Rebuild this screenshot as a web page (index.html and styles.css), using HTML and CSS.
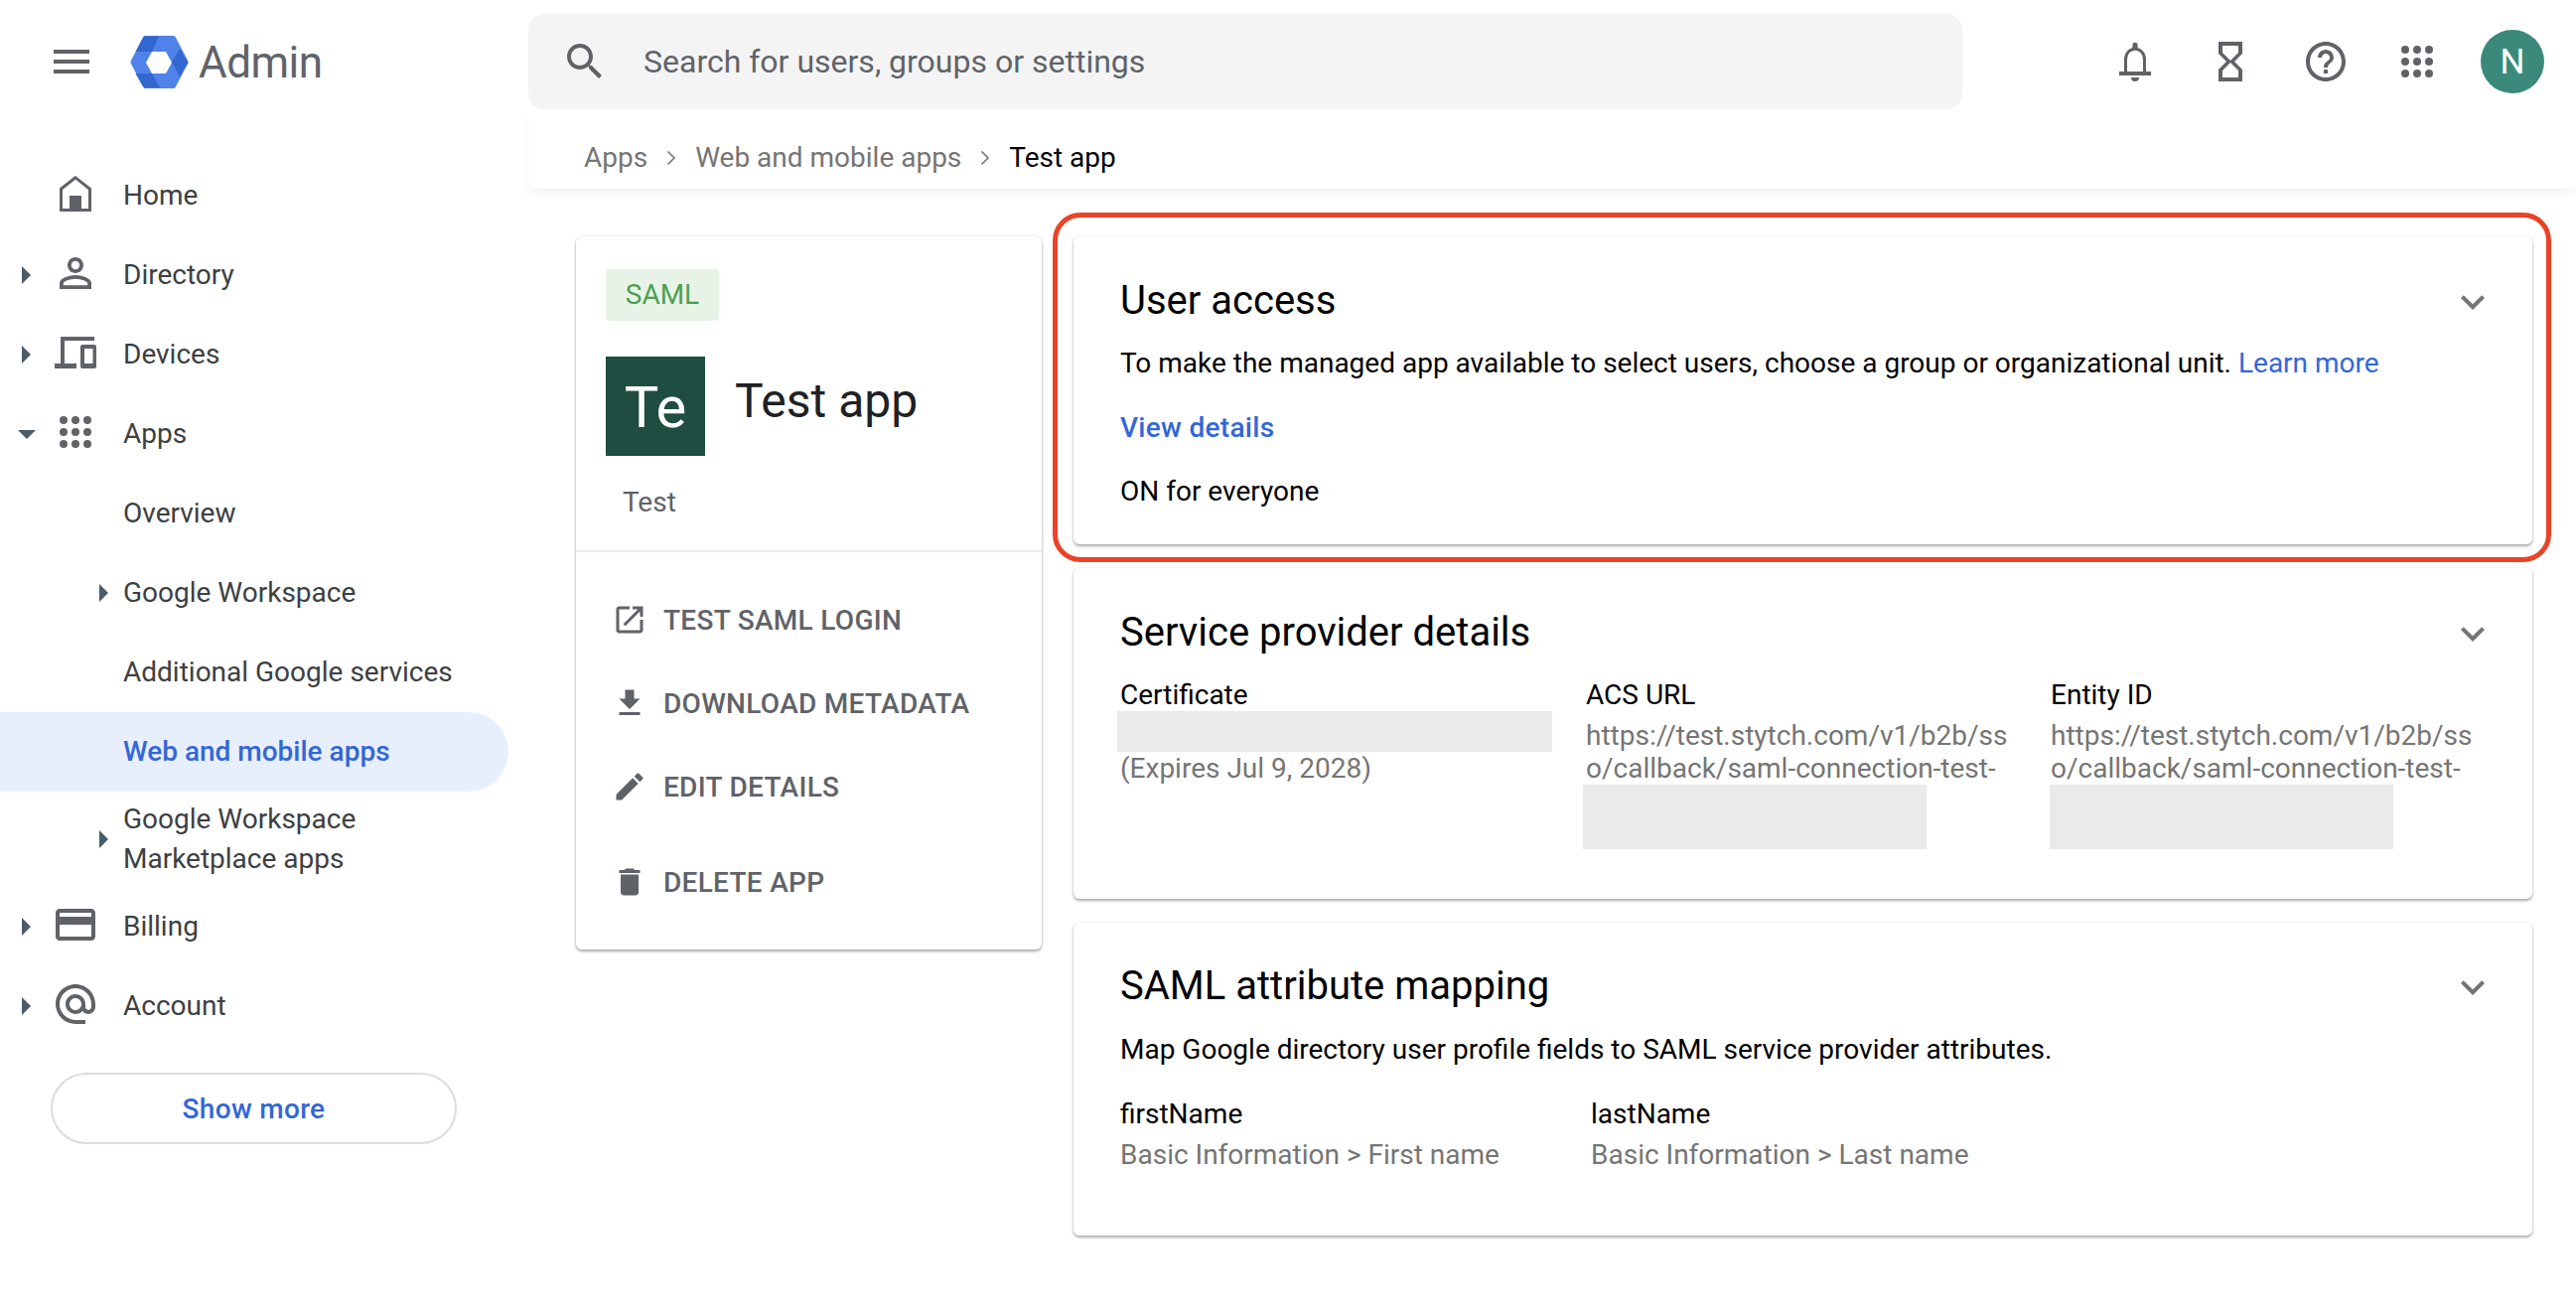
FILE: index.html
```html
<!DOCTYPE html>
<html lang="en">
<head>
<meta charset="utf-8">
<title>Admin - Test app</title>
<link rel="stylesheet" href="styles.css">
</head>
<body>
<div class="app">
  <aside class="sidebar">
    <div class="brand">
      <svg class="ico48" viewBox="0 0 24 24"><path d="M3 18h18v-2H3v2zm0-5h18v-2H3v2zm0-7v2h18V6H3z"/></svg>
      <svg class="logo" viewBox="0 0 59 53">
        <path class="logo-light" stroke-width="5" stroke-linejoin="round" d="M3 26.500 15.500 2.500h28L56 26.500 43.500 50.500h-28z"/>
        <path class="logo-dark" d="M14 0.500H29L22 16H5.500L13 2z"/>
        <path class="logo-dark" d="M42 27 50 13 58.500 27 50 41z"/>
        <path class="logo-dark" d="M5.500 38H22L30 52.500H14.500L13 51z"/>
        <path class="logo-hole" d="M16 27 22 16H36L42 27 36 38H22z"/>
      </svg>
      <span class="brand-name">Admin</span>
    </div>
    <nav class="nav">
      <a class="row">
        <span class="slot"></span>
        <svg class="ico48" viewBox="0 0 24 24"><path class="home-line" d="M12 3.900 4.750 9.600V20.250H19.250V9.600z"/><path d="M9 13h6v7.500H9z"/></svg>
        <span class="label">Home</span>
      </a>
      <a class="row">
        <span class="slot"><svg class="caret" viewBox="0 0 9 18"><path d="M0 0 9 9 0 18z"/></svg></span>
        <svg class="ico48" viewBox="0 0 24 24"><path d="M12 5.900a2.100 2.100 0 1 1 0 4.200 2.100 2.100 0 0 1 0-4.200m0 9c2.970 0 6.100 1.460 6.100 2.100v1.100H5.900V17c0-.64 3.130-2.100 6.100-2.100M12 4C9.790 4 8 5.790 8 8s1.790 4 4 4 4-1.790 4-4-1.790-4-4-4zm0 9c-2.670 0-8 1.340-8 4v3h16v-3c0-2.660-5.330-4-8-4z"/></svg>
        <span class="label">Directory</span>
      </a>
      <a class="row">
        <span class="slot"><svg class="caret" viewBox="0 0 9 18"><path d="M0 0 9 9 0 18z"/></svg></span>
        <span class="icon-box"><svg class="ico-devices" viewBox="0 0 42 32"><path d="M6 0H40V4H10V27H22V32H0V27H6z"/><path fill-rule="evenodd" d="M28 8H40a2 2 0 0 1 2 2V30a2 2 0 0 1-2 2H28a2 2 0 0 1-2-2V10a2 2 0 0 1 2-2zM30 12V27H38.500V12z"/></svg></span>
        <span class="label">Devices</span>
      </a>
      <a class="row">
        <span class="slot"><svg class="caret-down" viewBox="0 0 18 9"><path d="M0 0H18L9 9z"/></svg></span>
        <svg class="ico48" viewBox="0 0 48 48"><circle cx="12" cy="12" r="4"/><circle cx="24" cy="12" r="4"/><circle cx="36" cy="12" r="4"/><circle cx="12" cy="24" r="4"/><circle cx="24" cy="24" r="4"/><circle cx="36" cy="24" r="4"/><circle cx="12" cy="36" r="4"/><circle cx="24" cy="36" r="4"/><circle cx="36" cy="36" r="4"/></svg>
        <span class="label">Apps</span>
      </a>
      <a class="row"><span class="sub-slot"></span><span class="label">Overview</span></a>
      <a class="row"><span class="sub-slot"><svg class="caret" viewBox="0 0 9 18"><path d="M0 0 9 9 0 18z"/></svg></span><span class="label">Google Workspace</span></a>
      <a class="row"><span class="sub-slot"></span><span class="label">Additional Google services</span></a>
      <a class="row row-active"><span class="sub-slot"></span><span class="label">Web and mobile apps</span></a>
      <a class="row row-tall"><span class="sub-slot"><svg class="caret" viewBox="0 0 9 18"><path d="M0 0 9 9 0 18z"/></svg></span><span class="label">Google Workspace<br>Marketplace apps</span></a>
      <a class="row">
        <span class="slot"><svg class="caret" viewBox="0 0 9 18"><path d="M0 0 9 9 0 18z"/></svg></span>
        <svg class="ico48" viewBox="0 0 24 24"><path d="M20 4H4c-1.110 0-1.990.89-1.990 2L2 18c0 1.110.89 2 2 2h16c1.110 0 2-.89 2-2V6c0-1.110-.89-2-2-2zm0 14H4v-6h16v6zm0-10H4V6h16v2z"/></svg>
        <span class="label">Billing</span>
      </a>
      <a class="row">
        <span class="slot"><svg class="caret" viewBox="0 0 9 18"><path d="M0 0 9 9 0 18z"/></svg></span>
        <svg class="ico48" viewBox="0 0 24 24"><path d="M12 1.950c-5.520 0-10 4.480-10 10s4.480 10 10 10h5v-2h-5c-4.340 0-8-3.660-8-8s3.660-8 8-8 8 3.660 8 8v1.430c0 .79-.71 1.570-1.500 1.570s-1.500-.78-1.500-1.570v-1.430c0-2.760-2.240-5-5-5s-5 2.240-5 5 2.240 5 5 5c1.380 0 2.640-.56 3.540-1.470.65.89 1.770 1.470 2.960 1.470 1.970 0 3.500-1.600 3.500-3.570v-1.430c0-5.520-4.480-10-10-10zm0 13c-1.660 0-3-1.340-3-3s1.340-3 3-3 3 1.340 3 3-1.340 3-3 3z"/></svg>
        <span class="label">Account</span>
      </a>
    </nav>
    <button class="show-more">Show more</button>
  </aside>

  <main class="main">
    <header class="topbar">
      <div class="search">
        <svg class="ico48" viewBox="0 0 24 24"><path d="M15.500 14h-.79l-.28-.27C15.410 12.590 16 11.110 16 9.500 16 5.910 13.090 3 9.500 3S3 5.910 3 9.500 5.910 16 9.500 16c1.610 0 3.090-.59 4.230-1.570l.27.28v.79l5 4.990L20.490 19l-4.990-5zm-6 0C7.010 14 5 11.990 5 9.500S7.010 5 9.500 5 14 7.010 14 9.500 11.990 14 9.500 14z"/></svg>
        <span class="search-text">Search for users, groups or settings</span>
      </div>
      <div class="tools">
        <svg class="ico48" viewBox="0 0 24 24"><path class="bell-line" d="M7.250 17.500V11c0-3 1.900-5.400 4.750-5.400S16.750 8 16.750 11v6.500"/><path d="M4 17h16v2H4zM10 20h4a2 2 0 0 1-4 0zM10.700 5V3.700a1.300 1.300 0 0 1 2.600 0V5z"/></svg>
        <svg class="ico48" viewBox="0 0 24 24"><path d="M6 2v6h.01L6 8.010 10 12l-4 4 .01.01H6V22h12v-5.990h-.01L18 16l-4-4 4-3.990-.01-.01H18V2H6zm10 14.500V20H8v-3.500l4-4 4 4zm-4-5-4-4V4h8v3.500l-4 4z"/></svg>
        <svg class="ico48" viewBox="0 0 24 24"><path d="M11 18h2v-2h-2v2zm1-16C6.480 2 2 6.480 2 12s4.480 10 10 10 10-4.480 10-10S17.520 2 12 2zm0 18c-4.410 0-8-3.590-8-8s3.590-8 8-8 8 3.590 8 8-3.590 8-8 8zm0-14c-2.210 0-4 1.790-4 4h2c0-1.100.9-2 2-2s2 .9 2 2c0 2-3 1.750-3 5h2c0-2.250 3-2.500 3-5 0-2.210-1.790-4-4-4z"/></svg>
        <svg class="ico48 tool-grid" viewBox="0 0 48 48"><circle cx="12" cy="12" r="4"/><circle cx="24" cy="12" r="4"/><circle cx="36" cy="12" r="4"/><circle cx="12" cy="24" r="4"/><circle cx="24" cy="24" r="4"/><circle cx="36" cy="24" r="4"/><circle cx="12" cy="36" r="4"/><circle cx="24" cy="36" r="4"/><circle cx="36" cy="36" r="4"/></svg>
        <span class="avatar">N</span>
      </div>
    </header>
    <div class="crumbs">
      <span class="crumb">Apps</span>
      <svg class="crumb-sep" viewBox="0 0 10 16"><path d="M1.500 1.500 8 8 1.500 14.500"/></svg>
      <span class="crumb">Web and mobile apps</span>
      <svg class="crumb-sep" viewBox="0 0 10 16"><path d="M1.500 1.500 8 8 1.500 14.500"/></svg>
      <span class="crumb crumb-current">Test app</span>
    </div>

    <div class="content">
      <section class="app-card">
        <div class="app-info">
          <span class="badge">SAML</span>
          <div class="app-title">
            <span class="app-tile">Te</span>
            <h1 class="app-name">Test app</h1>
          </div>
          <p class="app-desc">Test</p>
        </div>
        <ul class="actions">
          <li class="action action-1">
            <svg class="ico36" viewBox="0 0 24 24"><path d="M19 19H5V5h7V3H5c-1.110 0-2 .9-2 2v14c0 1.100.89 2 2 2h14c1.100 0 2-.9 2-2v-7h-2v7zM14 3v2h3.590l-9.830 9.830 1.410 1.410L19 6.410V10h2V3h-7z"/></svg>
            <span>TEST SAML LOGIN</span>
          </li>
          <li class="action">
            <svg class="ico36" viewBox="0 0 24 24"><path d="M19 9h-4V3H9v6H5l7 7 7-7zM5 18v2h14v-2H5z"/></svg>
            <span>DOWNLOAD METADATA</span>
          </li>
          <li class="action">
            <svg class="ico36" viewBox="0 0 24 24"><path d="M3 17.250V21h3.750L17.810 9.940l-3.750-3.750L3 17.250zM20.710 7.040c.39-.39.39-1.020 0-1.410l-2.340-2.340c-.39-.39-1.020-.39-1.410 0l-1.830 1.830 3.750 3.750 1.830-1.830z"/></svg>
            <span>EDIT DETAILS</span>
          </li>
          <li class="action action-last">
            <svg class="ico36" viewBox="0 0 24 24"><path d="M6 19c0 1.100.9 2 2 2h8c1.100 0 2-.9 2-2V7H6v12zM19 4h-3.500l-1-1h-5l-1 1H5v2h14V4z"/></svg>
            <span>DELETE APP</span>
          </li>
        </ul>
      </section>

      <div class="panels">
        <div class="highlight">
          <section class="card card-access">
            <div class="card-head">
              <h2 class="card-title">User access</h2>
              <svg class="chevron" viewBox="0 0 24 24"><path d="M7.410 8.590 12 13.170l4.590-4.580L18 10l-6 6-6-6z"/></svg>
            </div>
            <p class="body-line">To make the managed app available to select users, choose a group or organizational unit. <a class="link">Learn more</a></p>
            <p class="body-line view-line"><a class="link link-strong">View details</a></p>
            <p class="body-line on-line">ON for everyone</p>
          </section>
        </div>

        <section class="card card-provider">
          <div class="card-head">
            <h2 class="card-title">Service provider details</h2>
            <svg class="chevron" viewBox="0 0 24 24"><path d="M7.410 8.590 12 13.170l4.590-4.580L18 10l-6 6-6-6z"/></svg>
          </div>
          <div class="provider-grid">
            <div class="field">
              <div class="field-label">Certificate</div>
              <div class="redact redact-cert"></div>
              <div class="field-value">(Expires Jul 9, 2028)</div>
            </div>
            <div class="field">
              <div class="field-label">ACS URL</div>
              <div class="field-value url">https://test.stytch.com/v1/b2b/sso/callback/saml-connection-test-</div>
              <div class="redact redact-url"></div>
            </div>
            <div class="field">
              <div class="field-label">Entity ID</div>
              <div class="field-value url">https://test.stytch.com/v1/b2b/sso/callback/saml-connection-test-</div>
              <div class="redact redact-url redact-entity"></div>
            </div>
          </div>
        </section>

        <section class="card card-mapping">
          <div class="card-head">
            <h2 class="card-title">SAML attribute mapping</h2>
            <svg class="chevron" viewBox="0 0 24 24"><path d="M7.410 8.590 12 13.170l4.590-4.580L18 10l-6 6-6-6z"/></svg>
          </div>
          <p class="body-line map-line">Map Google directory user profile fields to SAML service provider attributes.</p>
          <div class="map-grid">
            <div class="field">
              <div class="field-label">firstName</div>
              <div class="field-value map-value">Basic Information &gt; First name</div>
            </div>
            <div class="field">
              <div class="field-label">lastName</div>
              <div class="field-value map-value">Basic Information &gt; Last name</div>
            </div>
          </div>
        </section>
      </div>
    </div>
  </main>
</div>
</body>
</html>
```
FILE: styles.css
```css
* { box-sizing: border-box; }
html, body { margin: 0; padding: 0; background: #fff; }
body { font-family: Roboto, "Liberation Sans", sans-serif; font-size: 28px; color: #000; }
h1, h2, p, ul { margin: 0; padding: 0; font-weight: 400; }
ul { list-style: none; }
svg { display: block; flex: none; fill: #5f6368; }

.app { display: grid; grid-template-columns: 532px 2062px; height: 1324px; overflow: hidden; }

.ico48 { width: 48px; height: 48px; }
.ico36 { width: 36px; height: 36px; }

/* Sidebar */
.sidebar { display: flex; flex-direction: column; align-items: flex-start; }
.brand { display: flex; align-items: center; height: 157px; padding: 0 0 33px 48px; width: 100%; }
.logo { width: 59px; height: 53px; margin-left: 35px; }
.logo-light { fill: #4f83ea; stroke: #4f83ea; }
.logo-dark { fill: #3367d0; }
.logo-hole { fill: #fff; }
.brand-name { font-size: 44px; color: #5f6368; margin: 2px 0 0 10px; letter-spacing: -0.5px; }

.nav { width: 512px; }
.row { display: flex; align-items: center; height: 80px; color: #3c4043; line-height: 40px; }
.slot { width: 52px; display: flex; justify-content: center; padding-left: 1px; }
.icon-box { width: 48px; height: 48px; display: flex; align-items: center; justify-content: center; }
.sub-slot { width: 124px; padding-left: 100px; }
.row > .ico48, .row > .icon-box { margin: -4px 24px 0 0; }
.caret { width: 9px; height: 18px; fill: #4a5b6a; }
.caret-down { width: 18px; height: 9px; fill: #4a5b6a; }
.ico-devices { width: 42px; height: 32px; }
.home-line { fill: none; stroke: #5f6368; stroke-width: 1.5; }
.row-active { background: #e8effc; border-radius: 0 40px 40px 0; color: #3367d6; font-weight: 500; }
.row-tall { height: 96px; }
.show-more { margin: 27px 0 0 51px; width: 409px; height: 72px; border: 2px solid #dadce0; border-radius: 36px; background: #fff; font: 500 28px Roboto, sans-serif; letter-spacing: .3px; color: #3367d6; padding: 0; }

/* Top bar */
.topbar { display: flex; align-items: center; padding-top: 14px; height: 110px; }
.search { width: 1444px; height: 96px; background: #f4f4f4; border-radius: 16px; display: flex; align-items: center; padding-left: 33px; }
.search-text { margin-left: 35px; font-size: 32px; color: #5f6368; }
.tools { display: flex; align-items: center; gap: 48px; margin-left: 150px; }
.tool-grid { margin-left: -4px; margin-right: -8px; }
.bell-line { fill: none; stroke: #5f6368; stroke-width: 1.5; }
.avatar { width: 64px; height: 64px; border-radius: 50%; background: #3b897b; color: #fff; font-size: 35px; display: flex; align-items: center; justify-content: center; }

.crumbs { height: 80px; padding: 17px 0 0 56px; display: flex; align-items: center; gap: 19px; box-shadow: 0 6px 10px -3px rgba(0, 0, 0, .07); color: #757575; line-height: 40px; }
.crumb-current { color: #000; }
.crumb-sep { width: 10px; height: 16px; fill: none; stroke: #757575; stroke-width: 1.6; }

/* Content */
.content { display: flex; align-items: flex-start; padding: 48px 0 0 48px; gap: 32px; }

.app-card { width: 469px; height: 718px; background: #fff; border-radius: 6px; box-shadow: 0 2px 3px rgba(0, 0, 0, .32), 0 0 3px rgba(0, 0, 0, .12); }
.app-info { padding: 33px 30px 0; height: 318px; border-bottom: 2px solid #ededed; }
.badge { display: inline-block; width: 114px; height: 52px; line-height: 52px; text-align: center; background: #e8f3e8; border-radius: 4px; color: #4e9f50; }
.app-title { display: flex; align-items: flex-start; margin-top: 36px; }
.app-tile { width: 100px; height: 100px; background: #1f4d41; color: #fff; font-size: 58px; display: flex; align-items: center; justify-content: center; padding-top: 2px; }
.app-name { font-size: 48px; line-height: 60px; margin: 15px 0 0 30px; color: #202124; }
.app-desc { margin: 31px 0 0 17px; line-height: 32px; color: #5f6368; }
.actions { padding: 43px 0 0 36px; }
.action { display: flex; align-items: center; height: 50px; margin-bottom: 34px; gap: 16px; font-weight: 500; color: #5f6368; letter-spacing: .3px; }
.actions .action-last { margin-top: 46px; }

.panels { width: 1469px; display: flex; flex-direction: column; }
.highlight { position: relative; margin-bottom: 24px; }
.highlight::after { content: ""; position: absolute; top: -24px; right: -19px; bottom: -18px; left: -21px; border: 5px solid #ea4327; border-radius: 28px; pointer-events: none; }
.card { background: #fff; border-radius: 6px; padding: 41px 36px 0 47px; box-shadow: 0 2px 3px rgba(0, 0, 0, .32), 0 0 3px rgba(0, 0, 0, .08); }
.card-access { height: 310px; }
.card-provider { height: 333px; margin-bottom: 24px; }
.card-mapping { height: 315px; padding-top: 40px; }
.card-head { display: flex; align-items: center; justify-content: space-between; height: 48px; }
.card-title { font-size: 40px; line-height: 48px; color: #000; }
.chevron { width: 48px; height: 48px; fill: #757575; margin-top: 2px; }
.body-line { line-height: 40px; color: #000; }
.card-access .body-line { margin-top: 19px; }
.card-access .view-line { margin-top: 25px; }
.card-access .on-line { margin-top: 24px; }
.link { color: #3367d6; }
.link-strong { font-weight: 500; letter-spacing: .3px; }

.provider-grid { display: grid; grid-template-columns: 469px 468px 1fr; margin-top: 22px; }
.field-label { line-height: 33px; color: #000; }
.field-value { line-height: 33px; color: #757575; }
.url { width: 428px; word-break: break-all; margin-top: 8px; }
.redact { background: #eaeaea; }
.redact-cert { width: 438px; height: 41px; margin: 0 0 0 -3px; }
.redact-url { width: 346px; height: 65px; margin: 0 0 0 -3px; }
.redact-entity { margin-left: -1px; }

.map-line { margin-top: 20px; }
.map-grid { display: grid; grid-template-columns: 474px 1fr; margin-top: 28px; }
.map-value { margin-top: 8px; }
```
